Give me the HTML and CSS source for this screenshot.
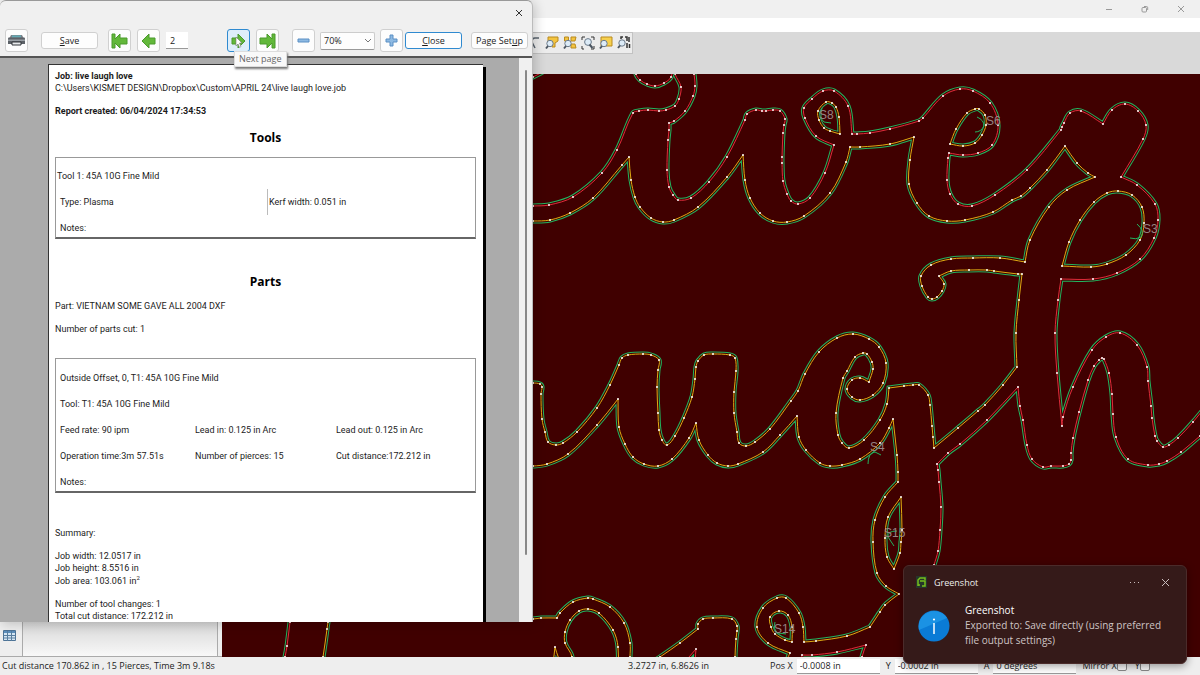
FILE: index.html
```html
<!DOCTYPE html>
<html lang="en">
<head>
<meta charset="utf-8">
<title>Job report</title>
<link rel="stylesheet" href="styles.css">
</head>
<body>
<div class="app">
  <header class="titlebar">
    <button class="caption" aria-label="Minimize"><svg width="8" height="8"><path d="M1 4.5h6"/></svg></button>
    <button class="caption" aria-label="Restore"><svg width="8" height="8"><rect x="1" y="2.5" width="4.500" height="4.500" rx="1"/><path d="M3 1.500h2.500a1.200 1.200 0 0 1 1.200 1.200V5"/></svg></button>
    <button class="caption" aria-label="Close window"><svg width="8" height="8"><path d="M1 1l6 6M7 1l-6 6"/></svg></button>
  </header>
  <div class="menubar"></div>
  <div class="tools">
    <div class="toolstrip">
      <button class="tool" aria-label="Zoom"><svg width="14" height="14"><path d="M12 2H8q-3 0-3 4l3 6" fill="none" stroke="#59636e" stroke-width="1.500"/></svg></button>
      <button class="tool" aria-label="Zoom to part"><svg width="14" height="14"><path d="M3 1h10v4l-3 2v4H7V7L3 5z" fill="#f3c440" stroke="#b98a1e"/><circle cx="5" cy="7.500" r="3.200" class="lens"/><path d="M3 10L1 12.500" class="handle"/></svg></button>
      <button class="tool" aria-label="Zoom to all parts"><svg width="14" height="14"><path d="M1.500 1h4v4h-4zM8 1h5l-1 4H8zM8 8h4l1 4H8z" fill="#f3c440" stroke="#b98a1e"/><circle cx="5" cy="7.500" r="3.200" class="lens"/><path d="M3 10L1 12.500" class="handle"/></svg></button>
      <button class="tool" aria-label="Zoom to extents"><svg width="14" height="14"><path d="M1 4V1h3M10 1h3v3M13 10v3h-3M1 10v3h2" fill="none" stroke="#333"/><circle cx="7" cy="6" r="3.400" class="lens"/><path d="M8.500 8.500l3 3.500" class="handle"/></svg></button>
      <button class="tool" aria-label="Zoom to sheet"><svg width="14" height="14"><path d="M2 1h11v9H2z" fill="#f6d04e" stroke="#b98a1e"/><circle cx="5" cy="7.500" r="3.200" class="lens"/><path d="M3 10L1 12.500" class="handle"/></svg></button>
      <button class="tool" aria-label="Zoom to machine"><svg width="14" height="14"><path d="M4 3V1h2M8 1h2v4M12 1v5M10 7v5M12.500 8v4" fill="none" stroke="#333" stroke-width="1.500"/><circle cx="5" cy="7" r="3.200" class="lens"/><path d="M3 9.500L1 12" class="handle"/></svg></button>
    </div>
  </div>
  <main class="work">
    <aside class="panel">
      <button class="panel-tab" aria-label="Table"><svg width="13" height="11"><path d="M.5.5h12v10H.5z" fill="#d5e6f4" stroke="#4d7396"/><path d="M1 1h11v2H1z" fill="#5c8fbd"/><path d="M.5 5.500h12M.5 8h12M4.500 1v10M8.500 1v10" fill="none" stroke="#587e9f"/></svg></button>
      <div class="panel-list"></div>
    </aside>
    <svg class="drawing" id="drawing" viewBox="222 74 978 583" preserveAspectRatio="xMinYMin slice" role="img" aria-label="Cut paths"></svg>
  </main>
  <footer class="status">
    <span class="status-main">Cut distance 170.862 in , 15 Pierces, Time 3m 9.18s</span>
    <span class="status-pos">3.2727 in, 6.8626 in</span>
    <label class="axis">Pos X <input value="-0.0008 in"></label>
    <label class="axis">Y <input value="-0.0002 in"></label>
    <label class="axis">A <input value="0 degrees"></label>
    <label class="mirror">Mirror X<input type="checkbox"></label>
    <label class="mirror">Y<input type="checkbox"></label>
  </footer>
</div>

<section class="dialog" role="dialog" aria-label="Print preview">
  <div class="dialog-title"><button class="dialog-close" aria-label="Close dialog"><svg width="8" height="8"><path d="M1 1l6 6M7 1l-6 6"/></svg></button></div>
  <div class="dialog-bar">
    <button class="btn icon" aria-label="Print"><svg width="19" height="15"><path d="M4 2h11l2 4H2z" fill="#7b8188"/><path d="M5 2.500h9v2H5z" fill="#62aab4"/><path d="M1 5.500q0-1 1-1h15q1 0 1 1V11H1z" fill="#5c6167"/><path d="M1 6.500h17V8H1z" fill="#9aa0a6"/><path d="M5 9h9v3H5z" fill="#e8eaec" stroke="#30343a"/></svg></button>
    <button class="btn wide save"><span><u>S</u>ave</span></button>
    <div class="group">
      <button class="btn icon" aria-label="First page"><svg width="17" height="16"><path d="M1 1h3v5l5-5v4h7v6H9v4L4 10v5H1z" class="arrow"/></svg></button>
      <button class="btn icon" aria-label="Previous page"><svg width="15" height="16"><path d="M1 8l7-7v4h6v6H8v4z" class="arrow"/></svg></button>
      <input class="page-no" value="2" aria-label="Page">
    </div>
    <div class="group nav">
      <button class="btn icon hot" aria-label="Next page"><svg width="15" height="16"><path d="M14 8L7 1v4H1v6h6v4z" class="arrow"/><path d="M5 4v9l2-2 1.500 3.500 1.500-1L8.500 10H11z" fill="#fff" stroke="#777" stroke-width=".6"/></svg></button>
      <button class="btn icon" aria-label="Last page"><svg width="17" height="16"><path d="M16 1h-3v5L8 1v4H1v6h7v4l5-5v5h3z" class="arrow"/></svg></button>
      <span class="tip" role="tooltip">Next page</span>
    </div>
    <div class="group zoom">
      <button class="btn icon" aria-label="Zoom out"><svg width="13" height="13"><path d="M1 5h11v3H1z" class="sign"/></svg></button>
      <div class="pick"><select aria-label="Zoom level"><option>70%</option></select><svg width="8" height="6"><path d="M1 1l3 3 3-3"/></svg></div>
      <button class="btn icon" aria-label="Zoom in"><svg width="13" height="13"><path d="M5 1h3v4h4v3H8v4H5V8H1V5h4z" class="sign"/></svg></button>
    </div>
    <button class="btn wide default"><span><u>C</u>lose</span></button>
    <button class="btn wide setup"><span>Page Set<u>u</u>p</span></button>
  </div>
  <div class="preview">
    <article class="sheet">
      <p class="strong">Job: live laugh love</p>
      <p>C:\Users\KISMET DESIGN\Dropbox\Custom\APRIL 24\live laugh love.job</p>
      <p class="strong created">Report created: 06/04/2024 17:34:53</p>
      <h2>Tools</h2>
      <div class="box tool-box">
        <p>Tool 1: 45A 10G Fine Mild</p>
        <div class="halves"><p>Type: Plasma</p><p class="kerf">Kerf width: 0.051 in</p></div>
        <p class="inset">Notes:</p>
      </div>
      <h2 class="parts">Parts</h2>
      <p>Part: VIETNAM SOME GAVE ALL 2004 DXF</p>
      <p class="count">Number of parts cut: 1</p>
      <div class="box part-box">
        <p>Outside Offset, 0, T1: 45A 10G Fine Mild</p>
        <p>Tool: T1: 45A 10G Fine Mild</p>
        <div class="thirds"><p>Feed rate: 90 ipm</p><p>Lead in: 0.125 in Arc</p><p>Lead out: 0.125 in Arc</p></div>
        <div class="thirds"><p>Operation time:3m 57.51s</p><p>Number of pierces: 15</p><p>Cut distance:172.212 in</p></div>
        <p>Notes:</p>
      </div>
      <p class="summary">Summary:</p>
      <p>Job width: 12.0517 in</p>
      <p>Job height: 8.5516 in</p>
      <p class="area">Job area: 103.061 in<sup>2</sup></p>
      <p>Number of tool changes: 1</p>
      <p>Total cut distance: 172.212 in</p>
    </article>
    <div class="scroll"><div class="thumb"></div></div>
  </div>
</section>

<section class="toast" role="status">
  <header class="toast-head">
    <svg width="11" height="12"><path d="M0 0h11v12H0z" fill="#26362a"/><path d="M9 4V2H4L2 4v6M2 9h2M4 5h5v5H6" fill="none" stroke="#75bf1d" stroke-width="1.500"/></svg>
    <span class="toast-app">Greenshot</span>
    <button aria-label="More"><svg width="11" height="9"><path d="M1 4.500h1M5 4.500h1M9 4.500h1"/></svg></button>
    <button aria-label="Dismiss"><svg width="9" height="9"><path d="M1 1l7 7M8 1l-7 7"/></svg></button>
  </header>
  <div class="toast-body">
    <svg width="32" height="32"><circle cx="16" cy="16" r="15.500" fill="#0a7bd6"/><path d="M1 20A15.500 15.500 0 0 1 29 8z" fill="#1b92e4"/><path d="M16 13v11" stroke="#fff" stroke-width="1.500"/><circle cx="16" cy="9.500" r="1.100" fill="#fff"/></svg>
    <div><p class="toast-name">Greenshot</p><p>Exported to: Save directly (using preferred file output settings)</p></div>
  </div>
</section>
<script src="drawing.js"></script>
</body>
</html>
```
FILE: styles.css
```css
* { box-sizing: border-box; }
body {
  margin: 0;
  font: 9px/12px "Open Sans", "Noto Sans", sans-serif;
  color: #1c1c1c;
  overflow: hidden;
}
p, h2 { margin: 0; }
button, input, select { font: inherit; color: inherit; margin: 0; padding: 0; border: 0; background: none; }
svg { display: block; flex: none; }

.app { display: flex; flex-direction: column; height: 100vh; background: #f0f0f0; }
.titlebar { display: flex; justify-content: flex-end; height: 18px; padding-right: 1px; }
.caption { width: 36px; display: grid; place-items: center; }
.caption svg { fill: none; stroke: #999; }
.menubar { height: 14px; background: #fff; }
.tools { height: 42px; padding-left: 526px; background: #d9d9d9; }
.toolstrip { display: flex; width: 107px; height: 22px; gap: 4px; align-items: center; background: #ececec; border: 1px solid #c2c2c2; }
.tool { width: 14px; }
.lens { fill: #dcebf7; stroke: #6b7a8a; }
.handle { fill: none; stroke: #4a5561; stroke-width: 2; }

.work { display: flex; flex: 1; min-height: 0; }
.panel { display: flex; align-items: stretch; width: 222px; padding-right: 4px; background: #eee; border-bottom: 1px solid #aaa; }
.panel-tab { width: 22px; display: flex; justify-content: center; align-items: flex-end; padding: 0 3px 15px 0; }
.panel-list { flex: 1; background: linear-gradient(#d6d6d6 calc(100% - 35px), #f8f8f8); border: solid #aaa; border-width: 0 1px; }
.drawing { flex: 1; min-width: 0; height: 100%; background: #400000; }
.halo { fill: none; stroke: #22b45e; stroke-width: 5; stroke-miterlimit: 6; }
.body { fill: #400000; fill-rule: evenodd; stroke: #400000; stroke-width: 3; stroke-miterlimit: 6; }
.red, .yellow { fill: none; stroke-width: 1; }
.red { stroke: #e02c3a; }
.yellow { stroke: #dfab12; }
.nodes { fill: none; stroke: #fff; stroke-width: 2; stroke-linecap: round; }
.lead { fill: none; stroke: #22b45e; }
.mark { font: 12px "Liberation Sans", sans-serif; fill: #978383; }

.status { display: flex; height: 18px; align-items: center; padding-left: 2px; white-space: nowrap; background: #eee; }
.status-main { width: 626px; }
.status-pos { width: 142px; }
.axis { display: flex; gap: 4px; align-items: center; margin-right: 6px; }
.axis input { width: 83px; height: 15px; padding-left: 3px; background: #fff; border-bottom: 1px solid #999; }
.mirror { display: flex; align-items: center; margin-right: 8px; }
.mirror input { appearance: none; width: 10px; height: 10px; border: 1px solid #888; border-radius: 2px; background: #f8f8f8; }

.dialog {
  position: absolute; left: 0; top: 0;
  width: 533px; height: calc(100vh - 53px);
  display: flex; flex-direction: column;
  background: #f0f0f0; border-top: 1px solid #999; border-right: 1px solid #bbb;
  border-radius: 6px 6px 0 0; box-shadow: 2px 2px 12px rgba(0, 0, 0, .2);
}
.dialog-title { height: 24px; display: flex; justify-content: flex-end; padding-right: 8px; }
.dialog-close { width: 10px; display: grid; place-items: center; }
.dialog-close svg { fill: none; stroke: #333; }
.dialog-bar { display: flex; align-items: center; height: 31px; padding: 0 4px 0 5px; flex: none; white-space: nowrap; }
.group { display: flex; align-items: center; gap: 6px; }
.btn { display: grid; place-items: center; background: #fdfdfd; border: 1px solid #d0d0d0; border-radius: 3px; }
.icon { width: 23px; height: 23px; }
.wide { width: 57px; height: 17px; }
.save { margin: 0 10px 0 13px; }
.hot { background: #deeefa; border-color: #2f8ad0; }
.default { border-color: #2f8ad0; margin: 0 9px 0 2px; }
.arrow { fill: #62b83a; stroke: #4a9a2c; }
.sign { fill: #8db9e2; stroke: #5a8fc4; }
.page-no { width: 22px; height: 17px; padding-left: 4px; background: #fff; border-bottom: 1px solid #999; }
.nav { position: relative; margin-left: 39px; }
.zoom { gap: 5px; margin-left: 13px; }
.pick { position: relative; display: flex; align-items: center; }
.pick select { appearance: none; width: 55px; height: 18px; padding-left: 3px; background: #fdfdfd; border: 1px solid #ccc; border-bottom-color: #999; border-radius: 2px; }
.pick svg { position: absolute; right: 3px; fill: none; stroke: #777; pointer-events: none; }
.tip { position: absolute; left: 7px; top: 22px; z-index: 1; padding: 1px 4px; background: #f9f9f9; border: 1px solid #ddd; box-shadow: 1px 2px 2px #777; color: #666; }

.preview { display: flex; flex: 1; min-height: 0; overflow: hidden; background: #ababab; border-top: 2px solid #555; }
.sheet { flex: 1; align-self: flex-start; min-width: 0; height: 700px; margin: 6px 36px 0 48px; padding: 5px 7px 0 6px; background: #fff; border: solid #333; border-width: 1px 0 0 1px; box-shadow: 3px 3px 0 #000; white-space: nowrap; font-family: Roboto, "Open Sans", sans-serif; }
.scroll { width: 13px; background: #f0f0f0; display: flex; justify-content: center; padding: 12px 0 67px; }
.thumb { width: 2px; border-radius: 1px; background: #888; }
.strong { font-weight: 700; }
.created { margin-top: 11px; }
h2 { font: 700 12px/18px "Open Sans", "Noto Sans", sans-serif; text-align: center; color: #000; }
.created + h2 { margin-top: 12px; }
.box { display: grid; gap: 14px; border: 1px solid #999; border-bottom: 2px solid #666; }
.tool-box { margin-top: 10px; padding: 12px 1px 3px; }
.halves { display: grid; grid-template-columns: 1fr 1fr; padding-left: 3px; }
.kerf { border-left: 1px solid #bbb; margin: -7px 0; padding: 7px 0 7px 1px; }
.inset { padding-left: 3px; }
.parts { margin: 34px 0 9px; }
.count { margin-top: 11px; }
.part-box { margin-top: 23px; padding: 13px 4px 3px; }
.thirds { display: grid; grid-template-columns: 135fr 141fr 135fr; }
.summary { margin: 34px 0 11px; }
.area { margin: 1px 0 11px; }
sup { font-size: 6px; line-height: 0; }

.toast { position: absolute; right: 13px; bottom: 11px; width: 284px; min-height: 99px; padding: 10px 16px 13px 12px; background: #351a19; border: 1px solid #4b2b2a; border-radius: 6px; color: #cfc5c5; font-size: 10px; line-height: 15px; box-shadow: 0 2px 8px rgba(0, 0, 0, .4); }
.toast-head { display: flex; align-items: center; height: 12px; }
.toast-app { flex: 1; padding-left: 7px; color: #eee; font-size: 9px; }
.toast-head button { margin-left: 21px; }
.toast-head button svg { fill: none; stroke: #c8bcbc; }
.toast-body { display: flex; gap: 15px; padding: 15px 0 0 2px; align-items: center; }
.toast-name { color: #fff; }
```
FILE: drawing.js
```js
// Contours are lists of x,y nodes. "|" marks a sharp corner.
const outline = [
  ["red", "515,207 533,206 549,205 573,197 602,173 617,150 633,113 639,111 648,110 659,111 666,110 675,106 679,99 681,87 675,74 672,62 | 692,62 694,74 695,86 693,96 685,111 674,121 669,123 | 669,130 668,140 667,170 669,187 673,195 678,200 691,198 709,182 727,157 745,120 747,114 756,110 762,111 766,111 773,110 780,111 785,119 784,125 783,133 782,157 782,163 783,181 787,194 791,201 798,204 810,198 825,173 834,145 | 816,136 805,118 804,108 812,99 823,91 834,91 848,106 852,134 | 857,134 870,133 890,129 919,121 923,118 943,96 960,89 973,91 990,103 998,125 992,145 978,153 963,155 949,153 | 948,158 947,180 950,194 958,204 972,206 995,195 1027,170 1061,130 1062,127 1064,123 1070,113 1081,111 1103,124 | 1112,110 1125,104 1138,111 1146,125 1143,139 1121,177 | 1137,185 1155,204 1158,220 1154,238 1140,259 1117,273 1093,279 1061,279 | 1058,300 1055,333 1057,373 1062,426 | 1063,417 1073,387 1092,350 1106,337 1120,333 1137,345 1147,367 1148,381 1151,406 1152,418 1155,436 1157,441 1163,447 1169,445 1178,438 1193,422 1215,395 | 1215,425 1200,436 1181,452 1167,461 1159,464 1148,465 1128,459 1116,437 1113,414 1112,394 1109,373 1104,359 1102,358 1099,360 1094,366 1088,380 1079,412 1073,438 1071,453 1071,460 1069,464 1063,466 1051,466 1043,467 1032,459 1027,445 1023,420 1020,406 1018,387 | 987,420 960,444 948,453 937,464 | 938,470 939,482 941,507 940,530 938,551 934,565 930,580"],
  ["yellow", "930,700 | 786,700 | 788,658 790,653 | 768,643 757,627 763,608 777,598 786,598 799,613 803,627 804,642 | 816,641 847,636 870,627 | 880,612 885,605 899,594 | 886,586 877,573 873,542 875,520 885,497 898,482 | 898,472 897,455 893,419 | 889,428 880,443 860,459 842,465 830,466 820,463 806,450 799,437 797,416 | 780,435 763,452 738,464 728,466 717,463 708,455 699,440 696,423 | 689,438 672,459 658,466 644,464 633,457 625,444 619,427 618,399 | 597,425 568,454 547,464 533,466 515,466 | 515,383 533,383 540,384 542,387 541,394 542,419 545,432 548,442 556,445 563,443 577,432 597,408 610,385 619,365 622,358 628,355 643,354 651,355 659,360 658,370 657,387 658,413 659,430 662,440 667,445 675,436 684,418 692,397 695,379 696,367 698,361 704,355 713,354 730,355 735,358 736,371 734,392 734,413 737,432 739,443 746,446 755,442 770,429 791,401 798,391 805,374 819,352 837,338 853,334 869,339 879,347 886,363 883,383 873,395 860,400 852,397 847,389 852,380 860,378 869,382 | 873,369 872,362 867,354 863,353 855,357 847,371 843,378 836,413 838,435 842,443 849,448 864,440 880,420 887,404 889,388 | 904,386 913,385 919,385 928,395 930,405 932,426 933,437 934,448 | 958,428 978,411 985,405 1003,385 1017,367 | 1016,333 1019,300 1022,274 | 1018,274 994,271 987,270 969,270 951,271 939,276 | 944,284 942,291 937,297 932,299 928,297 922,286 921,276 931,265 951,259 973,258 1000,258 1025,262 | 1030,240 1049,207 1067,190 1095,177 | 1088,173 1077,163 1065,146 | 1047,170 1030,188 1021,196 1012,200 993,212 965,220 947,221 929,216 917,203 909,184 910,160 914,137 | 890,144 860,147 850,147 | 846,162 830,193 804,216 787,222 773,221 760,213 750,198 745,180 743,155 | 727,177 698,207 674,220 663,222 651,218 640,207 635,197 631,180 629,157 | 622,165 593,198 570,213 550,220 533,221 515,221"]
];
const shapes = [
  outline,
  [["red", "634,60 636,74 640,80 647,84 655,86 664,83 671,77 674,60"]],
  [["yellow", "210,619 533,619 541,618 557,618 | 560,613 573,602 588,598 593,599 610,607 624,623 630,643 630,657 630,700 | 210,700"]],
  [["yellow", "640,670 660,657 680,643 698,629 | 698,624 703,619 713,618 732,619 737,626 737,631 736,639 735,657 735,700 | 640,700"]],
  [["red", "275,700 285,657 287,646 290,622 294,590"], ["yellow", "334,590 328,622 327,629 323,657 315,700"]],
  [["red", "515,85 533,77 550,68 | 515,68"]]
];
// Openings inside the shapes, keyed by the shape they cut.
const holes = {
  0: [
    ["yellow", "840,134 830,131 824,128 819,120 818,111 826,102 832,103 836,107 839,117 840,134"],
    ["yellow", "950,144 956,129 967,113 975,109 979,109 985,115 986,125 982,135 975,143 963,146 950,144"],
    ["yellow", "1062,266 1069,242 1080,220 1094,202 1107,193 1118,191 1132,195 1142,207 1144,223 1140,240 1126,255 1107,264 1091,267 1062,266"],
    ["yellow", "901,497 902,530 901,542 900,553 894,569 | 887,557 885,538 888,517 901,497"],
    ["yellow", "792,642 785,640 775,634 771,627 770,617 779,611 788,615 792,627 792,642"],
    ["red", "802,655 812,655 837,652 866,645 | 862,657 855,690 | 800,690 802,655"]
  ],
  2: [
    ["yellow", "572,690 572,657 565,643 565,632 570,620 579,611 588,609 599,613 613,630 618,647 618,690 | 572,690"],
    ["yellow", "550,690 555,647 | 566,690 550,690"]
  ],
  3: [["red", "660,690 696,649 | 690,690 660,690"]]
};

const svg = document.getElementById("drawing");
function add(tag, cls, attrs, text) {
  const el = document.createElementNS("http://www.w3.org/2000/svg", tag);
  el.setAttribute("class", cls);
  for (const key in attrs) el.setAttribute(key, attrs[key]);
  if (text) el.textContent = text;
  svg.append(el);
}
function parse(data) {
  const runs = data.split("|").map(r => r.trim().split(" ").map(p => p.split(",").map(Number)));
  for (let i = 1; i < runs.length; i++) runs[i].unshift(runs[i - 1].at(-1));
  return runs;
}
// Smooth curve whose handles follow the neighbouring nodes.
function curve(points) {
  const dir = i => {
    const a = points[Math.max(i - 1, 0)], b = points[Math.min(i + 1, points.length - 1)];
    const n = Math.hypot(b[0] - a[0], b[1] - a[1]) || 1;
    return [(b[0] - a[0]) / n, (b[1] - a[1]) / n];
  };
  let d = "";
  for (let i = 0; i < points.length - 1; i++) {
    const [x1, y1] = points[i], [x2, y2] = points[i + 1];
    const k = Math.hypot(x2 - x1, y2 - y1) / 3, u = dir(i), v = dir(i + 1);
    d += `C${x1 + u[0] * k} ${y1 + u[1] * k} ${x2 - v[0] * k} ${y2 - v[1] * k} ${x2} ${y2}`;
  }
  return d;
}
shapes.forEach((segments, index) => {
  const contours = [segments, ...(holes[index] || []).map(h => [h])];
  let body = "", nodes = "";
  const lines = [];
  for (const contour of contours) {
    let start = true;
    for (const [color, data] of contour) {
      const runs = parse(data);
      const first = runs[0][0];
      const d = runs.map(curve).join("");
      lines.push([color, `M${first}${d}`]);
      body += (start ? "M" : "L") + first + d;
      start = false;
      for (const run of runs) for (const p of run) nodes += `M${p}h0`;
    }
    body += "Z";
  }
  add("path", "halo", { d: body });
  add("path", "body", { d: body });
  for (const [color, d] of lines) add("path", color, { d });
  add("path", "nodes", { d: nodes });
});
add("path", "lead", { d: "M822 108q-3 10 2 14l7 1M977 117q7 3 7 9-3 6-9 6M1137 224q8 7 4 13-5 3-11 1M868 464q0-11 7-12l6 3M897 531q-10 0-9 6l6 9M775 622q-2 8 3 11l8 1" });
for (const [x, y, name] of [[819, 119, "S8"], [986, 125, "S6"], [1143, 233, "S3"], [870, 451, "S4"], [884, 537, "S15"], [774, 633, "S14"]])
  add("text", "mark", { x, y }, name);
```
